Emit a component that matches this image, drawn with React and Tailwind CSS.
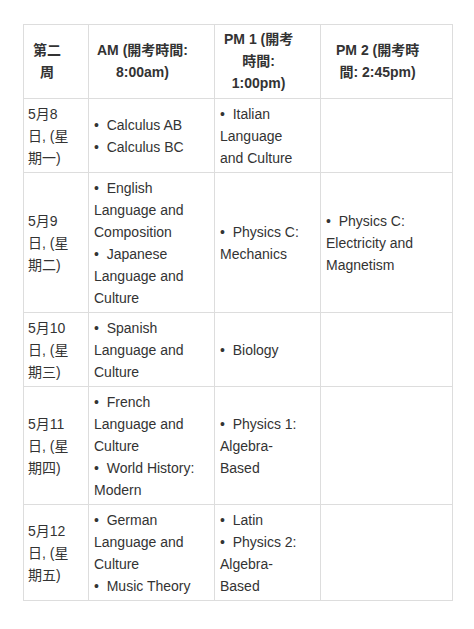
const B = '\u2022\u00a0\u00a0';

const rows = [
    [['5月8', '日, (星', '期一)'], [B + 'Calculus AB', B + 'Calculus BC'], [B + 'Italian', 'Language', 'and Culture'], []],
    [
        ['5月9', '日, (星', '期二)'],
        [B + 'English', 'Language and', 'Composition', B + 'Japanese', 'Language and', 'Culture'],
        [B + 'Physics C:', 'Mechanics'],
        [B + 'Physics C:', 'Electricity and', 'Magnetism'],
    ],
    [['5月10', '日, (星', '期三)'], [B + 'Spanish', 'Language and', 'Culture'], [B + 'Biology'], []],
    [
        ['5月11', '日, (星', '期四)'],
        [B + 'French', 'Language and', 'Culture', B + 'World History:', 'Modern'],
        [B + 'Physics 1:', 'Algebra-', 'Based'],
        [],
    ],
    [
        ['5月12', '日, (星', '期五)'],
        [B + 'German', 'Language and', 'Culture', B + 'Music Theory'],
        [B + 'Latin', B + 'Physics 2:', 'Algebra-', 'Based'],
        [],
    ],
];

const Lines = ({ lines }) =>
    lines.map((l, i) => (
        <div key={i} className="whitespace-nowrap">
            {l}
        </div>
    ));

const App = () => {
    return (
        <div
            className="min-h-[629px] bg-white pl-[23px] pt-[24px] text-[14px] leading-[22px] text-[#333333]"
            style={{ fontFamily: '"Liberation Sans", "Noto Sans CJK TC", sans-serif' }}
        >
            <table className="w-[429px] table-fixed border-collapse">
                <colgroup>
                    <col className="w-[65px]" />
                    <col className="w-[126px]" />
                    <col className="w-[106px]" />
                    <col className="w-[132px]" />
                </colgroup>
                <thead>
                    <tr>
                        <th className="border border-[#dddddd] pb-[4px] pl-[9px] pt-[3px] text-left align-middle font-bold">
                            <div className="inline-block text-center">第二<br />周</div>
                        </th>
                        <th className="border border-[#dddddd] pb-[4px] pl-[8px] pt-[3px] text-left align-middle font-bold">
                            <div className="inline-block whitespace-nowrap text-center">AM (開考時間:<br />8:00am)</div>
                        </th>
                        <th className="border border-[#dddddd] pb-[4px] pl-[9px] pt-[3px] text-left align-middle font-bold">
                            <div className="inline-block whitespace-nowrap text-center">PM 1 (開考<br />時間:<br />1:00pm)</div>
                        </th>
                        <th className="border border-[#dddddd] pb-[4px] pl-[15px] pt-[3px] text-left align-middle font-bold">
                            <div className="inline-block whitespace-nowrap text-center">PM 2 (開考時<br />間: 2:45pm)</div>
                        </th>
                    </tr>
                </thead>
                <tbody>
                    {rows.map((r, i) => (
                        <tr key={i}>
                            {r.map((cell, j) => (
                                <td
                                    key={j}
                                    className={
                                        j === 0
                                            ? 'border border-[#dddddd] pb-[3px] pl-[4px] pr-[4px] pt-[4px] text-left align-middle'
                                            : 'border border-[#dddddd] pb-[3px] pl-[5px] pr-[5px] pt-[4px] text-left align-middle'
                                    }
                                >
                                    <Lines lines={cell} />
                                </td>
                            ))}
                        </tr>
                    ))}
                </tbody>
            </table>
        </div>
    );
};

export default App;
